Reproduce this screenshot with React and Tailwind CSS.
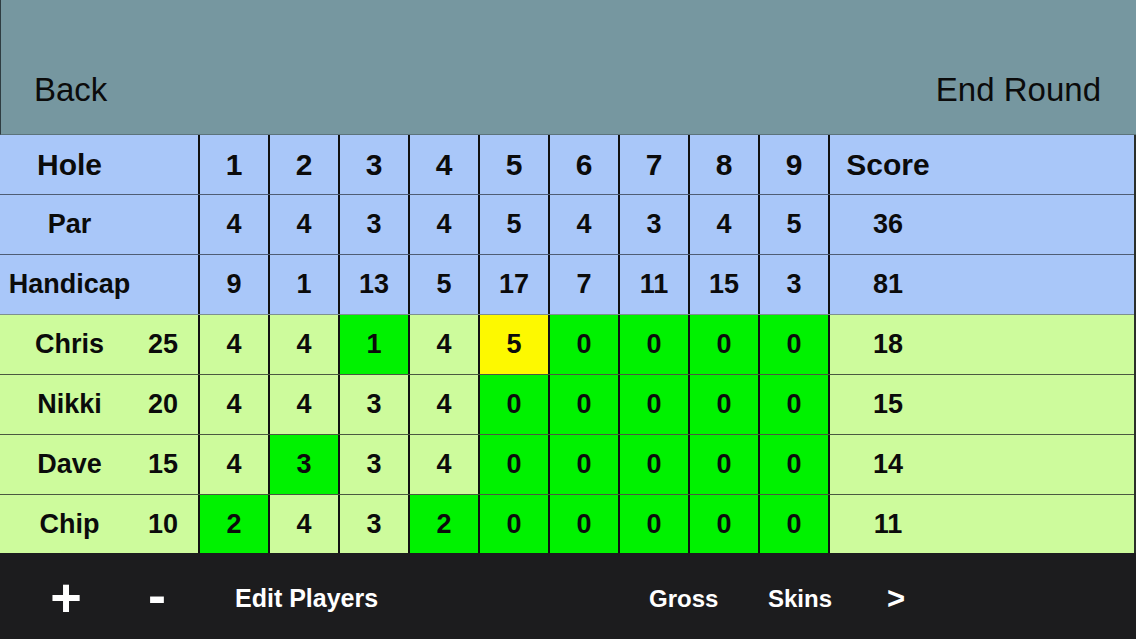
import React from "react";

const holes = [1, 2, 3, 4, 5, 6, 7, 8, 9];
const par = [4, 4, 3, 4, 5, 4, 3, 4, 5];
const handicap = [9, 1, 13, 5, 17, 7, 11, 15, 3];

// g = green highlight, y = yellow highlight
const players = [
  { name: "Chris", hcp: 25, scores: [4, 4, 1, 4, 5, 0, 0, 0, 0], marks: ["", "", "g", "", "y", "g", "g", "g", "g"], total: 18 },
  { name: "Nikki", hcp: 20, scores: [4, 4, 3, 4, 0, 0, 0, 0, 0], marks: ["", "", "", "", "g", "g", "g", "g", "g"], total: 15 },
  { name: "Dave", hcp: 15, scores: [4, 3, 3, 4, 0, 0, 0, 0, 0], marks: ["", "g", "", "", "g", "g", "g", "g", "g"], total: 14 },
  { name: "Chip", hcp: 10, scores: [2, 4, 3, 2, 0, 0, 0, 0, 0], marks: ["g", "", "", "g", "g", "g", "g", "g", "g"], total: 11 },
];

const markBg = {
  "": "",
  g: "bg-[#00f200]",
  y: "bg-[#fdf900]",
};

function Cell({ children, className = "" }) {
  return (
    <div className={`w-[70px] shrink-0 border-l-2 border-[#111] flex items-center justify-center ${className}`}>
      {children}
    </div>
  );
}

function ScoreCell({ children }) {
  return (
    <div className="flex-1 border-l-2 border-[#111] flex items-center">
      <span className="w-[116px] text-center">{children}</span>
    </div>
  );
}

function InfoRow({ label, values, total, border }) {
  return (
    <div className={`flex h-[60px] bg-[#a9c7f9] border-b ${border} text-[27px] font-bold`}>
      <div className="w-[198px] shrink-0 flex items-center">
        <span className="w-[139px] text-center">{label}</span>
      </div>
      {values.map((v, i) => (
        <Cell key={i}>{v}</Cell>
      ))}
      <ScoreCell>{total}</ScoreCell>
    </div>
  );
}

function PlayerRow({ player, last }) {
  return (
    <div
      className={`flex ${last ? "h-[58px]" : "h-[60px] border-b border-[#4a5840]"} bg-[#cdfb9c] text-[27px] font-bold`}
    >
      <div className="w-[198px] shrink-0 flex items-center">
        <span className="w-[139px] text-center">{player.name}</span>
        <span className="flex-1 text-right pr-[20px]">{player.hcp}</span>
      </div>
      {player.scores.map((s, i) => (
        <Cell key={i} className={markBg[player.marks[i]]}>
          {s}
        </Cell>
      ))}
      <ScoreCell>{player.total}</ScoreCell>
    </div>
  );
}

export default function App() {
  return (
    <div
      className="w-[1136px] h-[639px] flex flex-col overflow-hidden text-[#0b0b0b]"
      style={{ fontFamily: '"Liberation Sans", Arial, sans-serif' }}
    >
      {/* Nav bar */}
      <div className="h-[135px] shrink-0 bg-[#7697a0] border-l border-l-[#2f3d42] border-b border-b-[#5b737b] flex items-end justify-between pb-[24px] pl-[33px] pr-[35px]">
        <span className="text-[33px] leading-[40px]">Back</span>
        <span className="text-[33px] leading-[40px]">End Round</span>
      </div>

      {/* Scorecard */}
      <div className="flex flex-col border-r-2 border-r-[#2a2f2a]">
        <div className="flex h-[60px] bg-[#a9c7f9] border-b border-[#4f5d74] text-[30px] font-bold">
          <div className="w-[198px] shrink-0 flex items-center">
            <span className="w-[139px] text-center">Hole</span>
          </div>
          {holes.map((h) => (
            <Cell key={h}>{h}</Cell>
          ))}
          <ScoreCell>Score</ScoreCell>
        </div>
        <InfoRow label="Par" values={par} total={36} border="border-[#4f5d74]" />
        <InfoRow label="Handicap" values={handicap} total={81} border="border-[#7d9090]" />
        {players.map((p, i) => (
          <PlayerRow key={p.name} player={p} last={i === players.length - 1} />
        ))}
      </div>

      {/* Toolbar */}
      <div className="flex-1 bg-[#1c1c1e] flex items-center pt-[6px] text-white font-bold">
        <span className="w-[132px] text-center text-[54px] leading-none pb-[4px]">+</span>
        <span className="w-[50px] text-center text-[54px] leading-none pb-[8px]">-</span>
        <div className="w-[53px]" />
        <span className="w-[414px] text-[25px]">Edit Players</span>
        <span className="w-[119px] text-[24px]">Gross</span>
        <span className="w-[119px] text-[24px]">Skins</span>
        <span className="text-[31px] leading-none pb-[2px]">&gt;</span>
      </div>
    </div>
  );
}
